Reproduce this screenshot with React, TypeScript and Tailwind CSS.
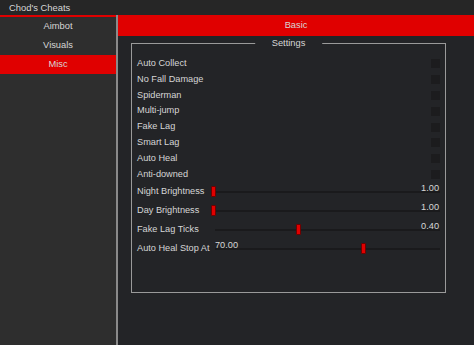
import React from "react";

const toggles = [
  "Auto Collect",
  "No Fall Damage",
  "Spiderman",
  "Multi-jump",
  "Fake Lag",
  "Smart Lag",
  "Auto Heal",
  "Anti-downed",
];

const sliders: { label: string; value: string; pct: number; valueLeft?: boolean }[] = [
  { label: "Night Brightness", value: "1.00", pct: 0 },
  { label: "Day Brightness", value: "1.00", pct: 0 },
  { label: "Fake Lag Ticks", value: "0.40", pct: 0.378 },
  { label: "Auto Heal Stop At", value: "70.00", pct: 0.67, valueLeft: true },
];

export default function App() {
  return (
    <div
      className="w-[474px] h-[345px] flex flex-col overflow-hidden text-[#d6d6d6]"
      style={{ fontFamily: '"Liberation Sans", Arial, sans-serif' }}
    >
      <div className="h-[15px] bg-[#262626] text-[9.4px] leading-[15px] pl-[9px] shrink-0">
        Chod's Cheats
      </div>
      <div className="flex flex-1 min-h-0">
        <div className="w-[116px] bg-[#2e2e2e] border-t-2 border-[#e00000] flex flex-col">
          <div className="h-[19px] flex items-center justify-center text-[9.3px]">Aimbot</div>
          <div className="h-[19px] flex items-center justify-center text-[9.3px]">Visuals</div>
          <div className="h-[19px] flex items-center justify-center text-[9.3px] bg-[#e00000]">Misc</div>
        </div>
        <div className="w-[2px] bg-[#8a8a8a]" />
        <div className="flex-1 bg-[#232427] flex flex-col">
          <div className="h-[21px] bg-[#e00000] flex items-center justify-center text-[9.3px] shrink-0">
            Basic
          </div>
          <div className="ml-[13px] mt-[7px] w-[315px] h-[250px] border border-[#9a9a9a] relative">
            <div className="absolute left-1/2 -translate-x-1/2 -top-[6px] px-[17px] bg-[#232427] text-[9.3px] leading-[11px]">
              Settings
            </div>
            <div className="pt-[12px] pl-[5px] pr-[5px] flex flex-col">
              {toggles.map((t) => (
                <div key={t} className="h-[15.8px] flex items-center justify-between text-[9.2px]">
                  <span>{t}</span>
                  <span className="w-[9px] h-[9px] bg-[#1c1c1e]" />
                </div>
              ))}
              {sliders.map((s) => (
                <div key={s.label} className="h-[19px] flex items-center text-[9.2px]">
                  <span className="w-[74px] shrink-0 whitespace-nowrap">{s.label}</span>
                  <div className="relative flex-1 h-full flex items-center">
                    <div className="absolute left-[4px] right-0 h-[2px] bg-[#1a1a1c]" />
                    <div
                      className="absolute w-[5px] h-[11px] bg-[#e00000] border border-[#700000] rounded-[1px]"
                      style={{ left: `${s.pct * 224}px` }}
                    />
                    <span
                      className={
                        s.valueLeft
                          ? "absolute left-[4px] top-0 text-[9.2px]"
                          : "absolute right-[1px] top-0 text-[9.2px]"
                      }
                    >
                      {s.value}
                    </span>
                  </div>
                </div>
              ))}
            </div>
          </div>
        </div>
      </div>
    </div>
  );
}
